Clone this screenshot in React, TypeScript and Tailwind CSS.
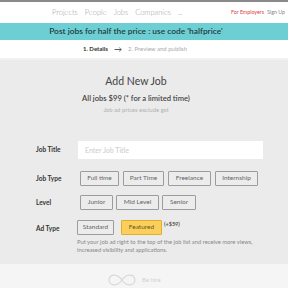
import React from "react";

function Chip({ label, active, w }: { label: string; active?: boolean; w: string }) {
  return (
    <button
      className={
        w +
        " h-[15px] border text-[6.5px] leading-none rounded-[1px] flex items-center justify-center " +
        (active
          ? "bg-[#fbcf5c] border-[#e0ad2c] text-[#6b5518]"
          : "bg-[#ececec] border-[#9c9c9c] text-[#666]")
      }
    >
      {label}
    </button>
  );
}

export default function App() {
  return (
    <div className="w-[288px] h-[288px] overflow-hidden bg-[#f5f5f5] font-['Lato','Open_Sans',sans-serif]">
      {/* Top nav */}
      <div className="h-[23px] bg-white border-t-2 border-[#8a8a8a] flex items-center">
        <div className="flex gap-[7px] pl-[52px] text-[7.5px] text-[#a0a0a0] font-light">
          <span>Projects</span>
          <span>People</span>
          <span>Jobs</span>
          <span>Companies</span>
          <span className="tracking-tighter">...</span>
        </div>
        <div className="ml-auto pr-[3px] flex gap-[3px] text-[5.3px]">
          <span className="text-[#e0413e]">For Employers</span>
          <span className="text-[#888]">Sign Up</span>
        </div>
      </div>

      {/* Banner */}
      <div className="h-[17px] bg-[#6dcfd3] flex items-center justify-center pr-[16px] text-[8.4px] font-semibold text-[#1f3c3f]">
        Post jobs for half the price : use code 'halfprice'
      </div>

      {/* Steps */}
      <div className="h-[18px] bg-white flex items-center pl-[83px] text-[6px] leading-none">
        <span className="font-bold text-[#333]">1. Details</span>
        <span className="ml-[6px] text-[#333] text-[8px]">&#x2192;</span>
        <span className="ml-[6px] text-[#aaa]">2. Preview and publish</span>
      </div>

      {/* Main */}
      <div className="bg-[#ebebeb] border-t-[2px] border-[#f2f2f2] pb-[10px]">
        <div className="flex flex-col items-center pt-[13px] pr-[16px]">
          <div className="text-[10.5px] leading-[16px] text-[#444]">Add New Job</div>
          <div className="mt-[4px] text-[7.6px] leading-[11px] text-[#444] font-semibold">
            All jobs $99 (* for a limited time)
          </div>
          <div className="mt-[2px] text-[6px] leading-[7px] text-[#b0b0b0]">Job ad prices exclude gst</div>
        </div>

        <div className="mt-[28px] pl-[36px] pr-[25px] flex flex-col">
          <div className="flex items-center h-[18px]">
            <div className="w-[42px] text-[6.5px] font-bold text-[#333]">Job Title</div>
            <div className="flex-1 h-[18px] bg-white flex items-center pl-[7px] text-[7px] text-[#ccc]">
              Enter Job Title
            </div>
          </div>

          <div className="flex items-center mt-[12px]">
            <div className="w-[44px] text-[6.5px] font-bold text-[#333]">Job Type</div>
            <div className="flex gap-[4px]">
              <Chip w="w-[39px]" label="Full time" />
              <Chip w="w-[41px]" label="Part Time" />
              <Chip w="w-[43px]" label="Freelance" />
              <Chip w="w-[43px]" label="Internship" />
            </div>
          </div>

          <div className="flex items-center mt-[9px]">
            <div className="w-[44px] text-[6.5px] font-bold text-[#333]">Level</div>
            <div className="flex gap-[3px]">
              <Chip w="w-[33px]" label="Junior" />
              <Chip w="w-[43px]" label="Mid Level" />
              <Chip w="w-[34px]" label="Senior" />
            </div>
          </div>

          <div className="flex items-start mt-[10px]">
            <div className="w-[44px] pt-[4px] text-[6.5px] font-bold text-[#333]">Ad Type</div>
            <div className="flex flex-col">
              <div className="flex items-start gap-[7px]">
                <Chip w="w-[37px]" label="Standard" />
                <div className="flex items-start gap-[2px]">
                  <Chip w="w-[41px]" label="Featured" active />
                  <span className="text-[5.5px] text-[#555] font-bold">(+$59)</span>
                </div>
              </div>
              <div className="mt-[3px] text-[5.8px] leading-[8px] text-[#888] w-[186px]">
                Put your job ad right to the top of the job list and receive more views, increased visibility and applications.
              </div>
            </div>
          </div>
        </div>
      </div>

      {/* Footer */}
      <div className="flex items-center pl-[107px] pt-[8px] gap-[5px]">
        <svg width="30" height="16" viewBox="0 0 30 16" fill="none" stroke="#d8d8d8" strokeWidth="1.2">
          <path d="M15 8 C11 2, 3 1, 2 8 C3 15, 11 14, 15 8 C19 2, 27 1, 28 8 C27 15, 19 14, 15 8 Z" />
        </svg>
        <span className="text-[6px] leading-[8px] text-[#d0d0d0]">Be hire</span>
      </div>
    </div>
  );
}
